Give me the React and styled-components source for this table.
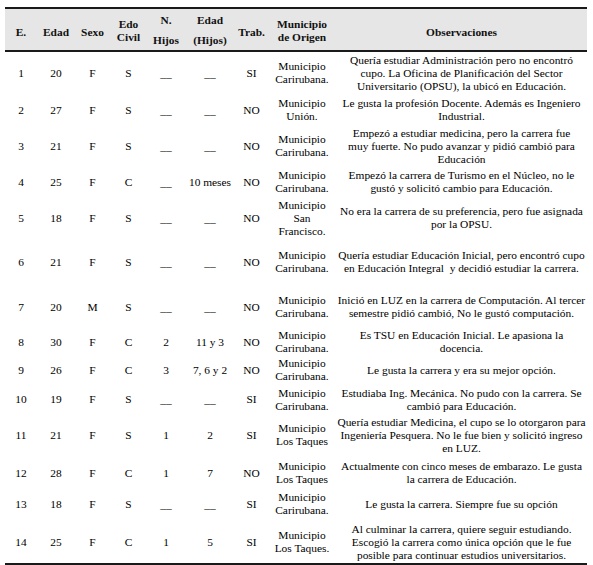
import React from "react";
import styled, { createGlobalStyle } from "styled-components";

const SERIF = `"Liberation Serif", Tinos, "Times New Roman", "DejaVu Serif", serif`;

const Global = createGlobalStyle`
  html, body { margin: 0; padding: 0; background: #ffffff; }
  body { font-family: ${SERIF}; color: #111; }
`;

const Page = styled.div`
  padding: 7px 6px 0 5px;
`;

const Table = styled.table`
  width: 582px;
  border-collapse: separate;
  border-spacing: 0;
  table-layout: fixed;
  font-family: ${SERIF};
  font-size: 11.4px;
`;

const HeadCell = styled.th`
  background: #e6e6e6;
  border-top: 2px solid #1a1a1a;
  border-bottom: 2px solid #1a1a1a;
  height: ${(p) => 41 - p.$pt}px;
  padding: ${(p) => p.$pt}px 0 0 0;
  font-family: ${SERIF};
  font-weight: bold;
  font-size: 11.4px;
  line-height: ${(p) => (p.$wide ? "20px" : "13px")};
  text-align: center;
  vertical-align: middle;
  color: #111;
`;

const Row = styled.tr`
  height: ${(p) => p.$h}px;
`;

const Cell = styled.td`
  padding: ${(p) => (p.$last ? "4px 0 0 0" : "0")};
  border-bottom: ${(p) => (p.$last ? "2px solid #1a1a1a" : "none")};
  font-family: ${SERIF};
  line-height: 13px;
  text-align: center;
  vertical-align: middle;
  white-space: nowrap;
  color: #000;
`;

const cols = [32, 38, 35, 37, 38, 50, 33, 68, 251];

const D = "__";

const rows = [
  { h: 42, v: ["1", "20", "F", "S", D, D, "SI"], m: ["Municipio", "Carirubana."], o: ["Quería estudiar Administración pero no encontró", "cupo. La Oficina de Planificación del Sector", "Universitario (OPSU), la ubicó en Educación."] },
  { h: 32, v: ["2", "27", "F", "S", D, D, "NO"], m: ["Municipio", "Unión."], o: ["Le gusta la profesión Docente. Además es Ingeniero", "Industrial."] },
  { h: 40, v: ["3", "21", "F", "S", D, D, "NO"], m: ["Municipio", "Carirubana."], o: ["Empezó a estudiar medicina, pero la carrera fue", "muy fuerte. No pudo avanzar y pidió cambió para", "Educación"] },
  { h: 32, v: ["4", "25", "F", "C", D, "10 meses", "NO"], m: ["Municipio", "Carirubana."], o: ["Empezó la carrera de Turismo en el Núcleo, no le", "gustó y solicitó cambio para Educación."] },
  { h: 40, v: ["5", "18", "F", "S", D, D, "NO"], m: ["Municipio", "San", "Francisco."], o: ["No era la carrera de su preferencia, pero fue asignada", "por la OPSU."] },
  { h: 48, v: ["6", "21", "F", "S", D, D, "NO"], m: ["Municipio", "Carirubana."], o: ["Quería estudiar Educación Inicial, pero encontró cupo", "en Educación Integral\u00a0 y decidió estudiar la carrera."] },
  { h: 42, v: ["7", "20", "M", "S", D, D, "NO"], m: ["Municipio", "Carirubana."], o: ["Inició en LUZ en la carrera de Computación. Al tercer", "semestre pidió cambió, No le gustó computación."] },
  { h: 28, v: ["8", "30", "F", "C", "2", "11 y 3", "NO"], m: ["Municipio", "Carirubana."], o: ["Es TSU en Educación Inicial. Le apasiona la", "docencia."] },
  { h: 28, v: ["9", "26", "F", "C", "3", "7, 6 y 2", "NO"], m: ["Municipio", "Carirubana."], o: ["Le gusta la carrera y era su mejor opción."] },
  { h: 31, v: ["10", "19", "F", "S", D, D, "SI"], m: ["Municipio", "Carirubana."], o: ["Estudiaba Ing. Mecánica. No pudo con la carrera. Se", "cambió para Educación."] },
  { h: 40, v: ["11", "21", "F", "S", "1", "2", "SI"], m: ["Municipio", "Los Taques"], o: ["Quería estudiar Medicina, el cupo se lo otorgaron para", "Ingeniería Pesquera. No le fue bien y solicitó ingreso", "en LUZ."] },
  { h: 36, v: ["12", "28", "F", "C", "1", "7", "NO"], m: ["Municipio", "Los Taques"], o: ["Actualmente con cinco meses de embarazo. Le gusta", "la carrera de Educación."] },
  { h: 22, v: ["13", "18", "F", "S", D, D, "SI"], m: ["Municipio", "Carirubana."], o: ["Le gusta la carrera. Siempre fue su opción"] },
  { h: 48, v: ["14", "25", "F", "C", "1", "5", "SI"], m: ["Municipio", "Los Taques."], o: ["Al culminar la carrera, quiere seguir estudiando.", "Escogió la carrera como única opción que le fue", "posible para continuar estudios universitarios."] },
];

const Lines = ({ items }) =>
  items.map((t, i) => (
    <React.Fragment key={i}>
      {i > 0 && <br />}
      {t}
    </React.Fragment>
  ));

export default function App() {
  return (
    <>
      <Global />
      <Page>
        <Table>
          <colgroup>
            {cols.map((w, i) => (
              <col key={i} style={{ width: w }} />
            ))}
          </colgroup>
          <thead>
            <tr>
              <HeadCell $pt={6}>E.</HeadCell>
              <HeadCell $pt={6}>Edad</HeadCell>
              <HeadCell $pt={6}>Sexo</HeadCell>
              <HeadCell $pt={3}>Edo<br />Civil</HeadCell>
              <HeadCell $pt={1} $wide>N.<br />Hijos</HeadCell>
              <HeadCell $pt={1} $wide>Edad<br />(Hijos)</HeadCell>
              <HeadCell $pt={6}>Trab.</HeadCell>
              <HeadCell $pt={3}>Municipio<br />de Origen</HeadCell>
              <HeadCell $pt={5}>Observaciones</HeadCell>
            </tr>
          </thead>
          <tbody>
            {rows.map((r, i) => {
              const last = i === rows.length - 1;
              return (
                <Row key={i} $h={r.h}>
                  {r.v.map((v, j) => (
                    <Cell key={j} $last={last}>{v}</Cell>
                  ))}
                  <Cell $last={last}><Lines items={r.m} /></Cell>
                  <Cell $last={last}><Lines items={r.o} /></Cell>
                </Row>
              );
            })}
          </tbody>
        </Table>
      </Page>
    </>
  );
}
